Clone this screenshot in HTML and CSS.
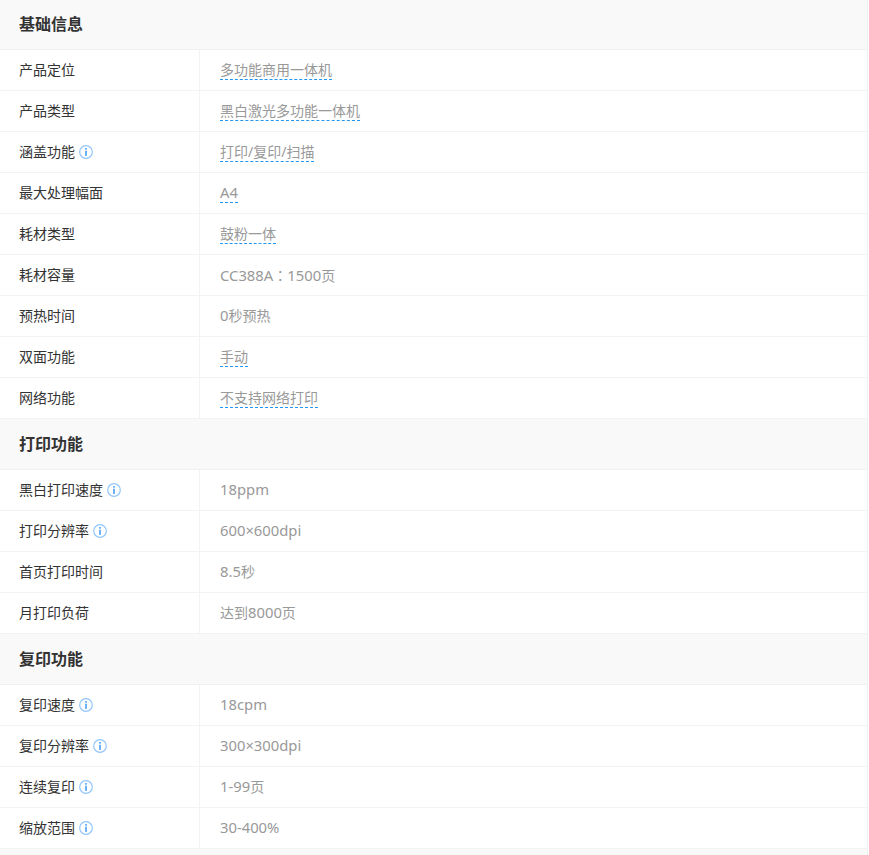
FILE: index.html
```html
<!DOCTYPE html>
<html lang="zh-CN">
<head>
<meta charset="utf-8">
<title>参数</title>
<link rel="stylesheet" href="styles.css">
</head>
<body>
<svg class="defs" width="0" height="0" aria-hidden="true"><symbol id="info" viewBox="0 0 14 14"><circle cx="7" cy="7" r="6.3" fill="none" stroke="#93c6fb" stroke-width="1.2"/><rect x="6.1" y="3" width="1.8" height="1.7" fill="#5aa9f8"/><rect x="6.1" y="5.7" width="1.8" height="5.2" fill="#5aa9f8"/></symbol></svg>
<main class="spec">
<h2 class="head first">基础信息</h2>
<div class="row"><div class="key">产品定位</div><div class="val"><span class="link">多功能商用一体机</span></div></div>
<div class="row"><div class="key">产品类型</div><div class="val"><span class="link">黑白激光多功能一体机</span></div></div>
<div class="row"><div class="key">涵盖功能<svg class="ic"><use href="#info"/></svg></div><div class="val"><span class="link">打印/复印/扫描</span></div></div>
<div class="row"><div class="key">最大处理幅面</div><div class="val"><span class="link"><span class="lat">A4</span></span></div></div>
<div class="row"><div class="key">耗材类型</div><div class="val"><span class="link">鼓粉一体</span></div></div>
<div class="row"><div class="key">耗材容量</div><div class="val"><span class="lat">CC388A</span><span class="colon" lang="zh-Hant">：</span><span class="lat">1500</span>页</div></div>
<div class="row"><div class="key">预热时间</div><div class="val"><span class="lat">0</span>秒预热</div></div>
<div class="row"><div class="key">双面功能</div><div class="val"><span class="link">手动</span></div></div>
<div class="row"><div class="key">网络功能</div><div class="val"><span class="link">不支持网络打印</span></div></div>
<h2 class="head">打印功能</h2>
<div class="row"><div class="key">黑白打印速度<svg class="ic"><use href="#info"/></svg></div><div class="val"><span class="lat">18ppm</span></div></div>
<div class="row"><div class="key">打印分辨率<svg class="ic"><use href="#info"/></svg></div><div class="val"><span class="lat">600×600dpi</span></div></div>
<div class="row"><div class="key">首页打印时间</div><div class="val"><span class="lat">8.5</span>秒</div></div>
<div class="row"><div class="key">月打印负荷</div><div class="val">达到<span class="lat">8000</span>页</div></div>
<h2 class="head">复印功能</h2>
<div class="row"><div class="key">复印速度<svg class="ic"><use href="#info"/></svg></div><div class="val"><span class="lat">18cpm</span></div></div>
<div class="row"><div class="key">复印分辨率<svg class="ic"><use href="#info"/></svg></div><div class="val"><span class="lat">300×300dpi</span></div></div>
<div class="row"><div class="key">连续复印<svg class="ic"><use href="#info"/></svg></div><div class="val"><span class="lat">1-99</span>页</div></div>
<div class="row"><div class="key">缩放范围<svg class="ic"><use href="#info"/></svg></div><div class="val"><span class="lat">30-400%</span></div></div>
<div class="tail"></div>
</main>
</body>
</html>
```
FILE: styles.css
```css
html, body { margin: 0; padding: 0; background: #fff; }
body { height: 855px; overflow: hidden; font-family: "Noto Sans", "Noto Sans CJK SC", sans-serif; font-size: 14px; }
.defs { position: absolute; }
.spec { width: 867px; border-right: 1px solid #f0f0f0; }
.head { margin: 0; box-sizing: border-box; height: 51px; padding-left: 19px; background: #f9f9f9; border-bottom: 1px solid #f0f0f0; font-size: 16px; font-weight: 700; line-height: 50px; color: #333; }
.head.first { height: 50px; line-height: 48px; }
.row { box-sizing: border-box; height: 41px; display: flex; border-bottom: 1px solid #f3f3f3; }
.key { box-sizing: border-box; width: 200px; padding-left: 19px; border-right: 1px solid #f3f3f3; display: flex; align-items: center; color: #333; line-height: 40px; }
.val { padding-left: 20px; color: #999; line-height: 40px; }
.lat { font-size: 14.8px; line-height: 1; }
.link { border-bottom: 1px dashed #2196f3; }
.colon { font-family: "Noto Sans CJK TC", sans-serif; }
.ic { width: 14px; height: 14px; margin-left: 4px; }
.tail { height: 6px; background: #f9f9f9; }
```
